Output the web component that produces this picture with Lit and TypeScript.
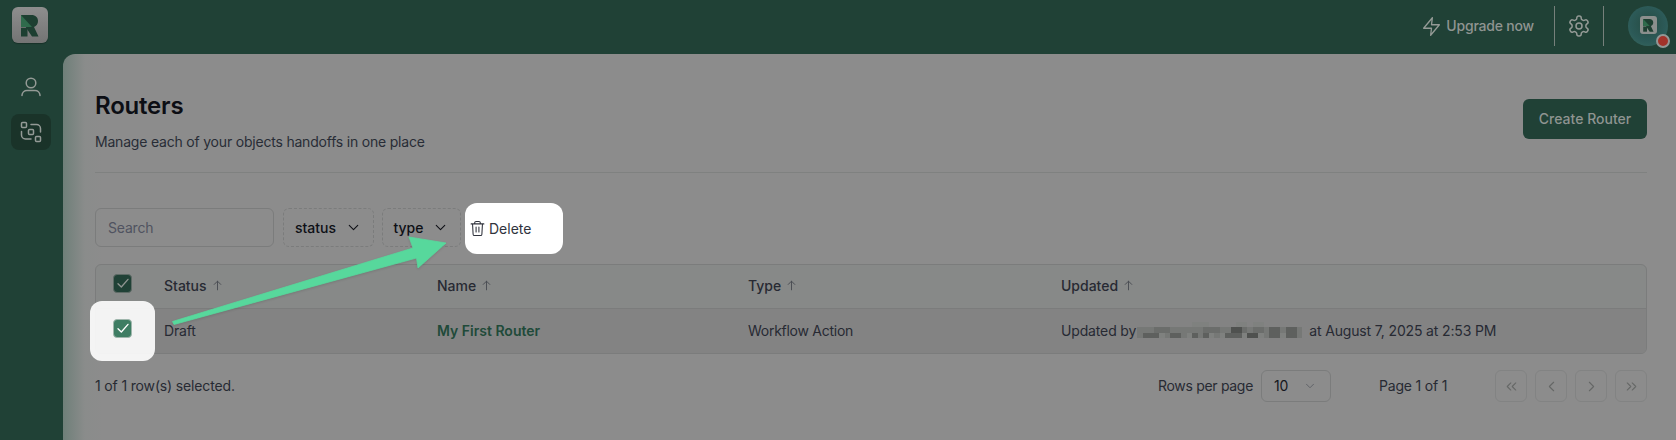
import { LitElement, html, css, svg } from "lit";
import { customElement } from "lit/decorators.js";

const chevronDown = html`<svg class="chev" viewBox="0 0 24 24"><path d="m6 9 6 6 6-6"/></svg>`;
const arrowUp = html`<svg class="sort" viewBox="0 0 24 24"><path d="M12 20V4M6 10l6-6 6 6"/></svg>`;
const check = html`<svg viewBox="0 0 24 24"><path d="M4.5 13l5 5L19.5 6.5"/></svg>`;

const shades = ["transparent", "#7f817f", "#767876", "#6b6d6b", "#5e605e", "#4f514f"];
const blurRows = [
  "000000000011100000110110000000",
  "222333222222333225532332442442",
  "244412442142412144415512441442",
];

@customElement("app-root")
export class AppRoot extends LitElement {
  static styles = css`
    :host { display: block; width: 1676px; height: 440px; overflow: hidden; position: relative; background: #204136;
      font-family: Inter, "Liberation Sans", sans-serif; color: #2a2d36; font-size: 14px; letter-spacing: -.15px; }
    .top { height: 54px; display: flex; align-items: center; padding-bottom: 2px; box-sizing: border-box; }
    .logo { width: 36px; height: 36px; margin: -2px 0 0 12px; border-radius: 6px; background: linear-gradient(#8e8e8e, #747474); display: flex; align-items: center; justify-content: center; box-shadow: 0 1px 1px rgba(0,0,0,.25); }
    .logo svg { width: 18px; height: 22px; margin-top: 1px; }
    .spacer { flex: 1; }
    .upgrade { display: flex; align-items: center; gap: 4px; color: #8f9491; font-weight: 500; font-size: 14px; margin-right: 20px; letter-spacing: -.2px; line-height: 17px; }
    .upgrade span { padding-bottom: 2px; }
    .upgrade svg { width: 21px; height: 21px; }
    .sep { width: 1px; height: 40px; background: #76807b; }
    .gear { width: 48px; display: flex; justify-content: center; }
    .gear svg { width: 24px; height: 24px; }
    .avatar { width: 40px; height: 40px; margin: 0 8px 0 24px; border-radius: 50%; position: relative; display: flex; align-items: center; justify-content: center;
      background: radial-gradient(circle at 50% 45%, #264b42 0, #2c5a58 60%, #3a6b60 100%); }
    .avatar .inner { width: 17px; height: 18px; border-radius: 3px; background: #8b8f8d; display: flex; align-items: center; justify-content: center; margin-bottom: 2px; }
    .avatar .inner svg { width: 11px; height: 13px; }
    .dot { position: absolute; right: -2px; bottom: -2px; width: 14px; height: 14px; box-sizing: border-box; border-radius: 50%; background: #a2332a; border: 2px solid #939795; }
    .body { display: flex; height: 386px; }
    .side { width: 63px; display: flex; flex-direction: column; align-items: center; padding: 14px 1px 0 0; box-sizing: border-box; gap: 10px; }
    .side .item { width: 40px; height: 36px; display: flex; align-items: center; justify-content: center; border-radius: 8px; }
    .side .item.active { background: #1a3329; }
    .side svg { width: 24px; height: 24px; }
    .ic { fill: none; stroke: #949a96; stroke-width: 1.5; stroke-linecap: round; stroke-linejoin: round; }
    .main { flex: 1; background: linear-gradient(90deg, #6f7f79 0, #8a8c8b 22px, #8c8c8c 40px); border-top-left-radius: 12px; padding: 0 29px 0 32px; box-sizing: border-box; position: relative; }
    .head { display: flex; justify-content: space-between; align-items: flex-start; height: 119px; border-bottom: 1px solid #7f8180; box-sizing: border-box; padding-top: 36px; }
    h1 { margin: 0; font-size: 24px; line-height: 32px; font-weight: 600; color: #0c0e14; letter-spacing: -.2px; }
    .sub { margin-top: 10px; line-height: 20px; color: #282c36; font-size: 14px; letter-spacing: -.2px; }
    .create { width: 124px; height: 40px; padding-bottom: 2px; box-sizing: border-box; margin-top: 9px; border: 0; border-radius: 6px; background: #204136; color: #8f9491; font: 500 14px Inter, sans-serif; letter-spacing: 0; display: flex; align-items: center; justify-content: center; }
    .toolbar { display: flex; align-items: center; height: 39px; margin-top: 35px; position: relative; }
    .search { width: 179px; height: 39px; box-sizing: border-box; border: 1px solid #7b7c7c; border-radius: 6px; padding-left: 12px; display: flex; align-items: center; color: #505360; font-size: 14px; letter-spacing: -.2px; }
    .filter { height: 39px; box-sizing: border-box; border: 1px dashed #7b7c7c; border-radius: 6px; display: flex; align-items: center; justify-content: center; gap: 9px; font-weight: 500; color: #0e1016; font-size: 14px; letter-spacing: 0; }
    .filter.s { width: 91px; margin-left: 9px; }
    .filter.t { width: 79px; margin-left: 8px; }
    .chev { width: 17px; height: 17px; fill: none; stroke: #0e1016; stroke-width: 1.5; stroke-linecap: round; stroke-linejoin: round; }
    .delete { width: 98px; height: 51px; margin: 2px 0 0 4px; background: #fff; border-radius: 12px; display: flex; align-items: center; gap: 3px; padding-left: 4px; box-sizing: border-box; color: #30333d; font-size: 14px; letter-spacing: 0; position: relative; z-index: 2; }
    .delete svg { width: 17px; height: 17px; fill: none; stroke: #30333d; stroke-width: 1.5; stroke-linecap: round; stroke-linejoin: round; margin-top: -1px; }
    .table { margin-top: 17px; height: 90px; border: 1px solid #7b7c7c; border-radius: 6px; box-sizing: border-box; overflow: hidden; background: #878988; }
    .row { display: grid; grid-template-columns: 68px 273px 311px 313px 1fr; align-items: center; height: 44px; box-sizing: border-box; }
    .row.hdr { border-bottom: 1px solid #7b7c7c; }
    .row.sel { background: #838383; }
    .cell { display: flex; align-items: center; white-space: nowrap; color: #272a33; font-size: 14px; padding-bottom: 2px; }
    .hdr .cell { font-weight: 500; gap: 4px; letter-spacing: 0; }
    .tight { letter-spacing: -.27px; }
    .sort { width: 13px; height: 13px; fill: none; stroke: #4a4d53; stroke-width: 1.8; stroke-linecap: round; stroke-linejoin: round; }
    .cb { width: 19px; height: 19px; border-radius: 4px; margin-left: 17px; display: flex; align-items: center; justify-content: center; box-sizing: border-box; position: relative; z-index: 3; }
    .cb svg { width: 16px; height: 16px; fill: none; stroke-width: 2; stroke-linecap: round; stroke-linejoin: round; }
    .cb.dim { background: #204136; border: 1px solid #5e6b66; margin-top: -5px; }
    .cb.dim svg { stroke: #8f9491; }
    .cb.lit { background: #3e7d63; border: 1px solid #9fb6ac; margin-top: -4px; }
    .cb.lit svg { stroke: #fff; }
    .link { color: #204a39; font-weight: 600; letter-spacing: 0; }
    .blur { display: grid; grid-template-columns: repeat(30, 5.5px); grid-auto-rows: 5.5px; margin: 0 7px 0 1px; }
    .foot { display: flex; align-items: center; margin-top: 16px; height: 32px; color: #272a33; font-size: 14px; }
    .foot .count { flex: 1; padding-bottom: 2px; }
    .rows { letter-spacing: -.3px; padding-bottom: 2px; }
    .sel-box { width: 70px; height: 32px; box-sizing: border-box; margin-left: 8px; border: 1px solid #7b7c7c; border-radius: 6px; display: flex; align-items: center; justify-content: space-between; padding: 0 13px 2px 12px; color: #15171d; }
    .sel-box .chev { stroke: #5a5d63; width: 14px; height: 14px; margin-top: 2px; }
    .page { margin-left: 48px; width: 116px; letter-spacing: -.2px; padding-bottom: 2px; }
    .pager { display: flex; gap: 8px; }
    .pager span { width: 32px; height: 32px; box-sizing: border-box; border: 1px solid #828383; border-radius: 6px; display: flex; align-items: center; justify-content: center; }
    .pager svg { width: 17px; height: 17px; fill: none; stroke: #656766; stroke-width: 1.5; stroke-linecap: round; stroke-linejoin: round; }
    .hl { position: absolute; left: 90px; top: 301px; width: 65px; height: 60px; border-radius: 12px; background: rgba(255,255,255,.9); z-index: 2; }
    .arrow { position: absolute; left: 0; top: 0; width: 1676px; height: 440px; z-index: 4; pointer-events: none; overflow: visible; filter: drop-shadow(0 1px 1px rgba(0,0,0,.12)); }
  `;

  private rMark() {
    return svg`<path d="M0 0H10.5C14.5 0 17 2.5 17 6C17 9 15.5 11 13 12L17.5 21.5H11L4.8 12.3H0Z" fill="#1d3f31"/>
      <path d="M0 0L11 12H0Z" fill="#2f6b4c"/>
      <path d="M0 13H6.5V21.5H0Z" fill="#1d3f31"/>`;
  }

  render() {
    return html`
      <div class="top">
        <div class="logo"><svg viewBox="0 0 18 22">${this.rMark()}</svg></div>
        <div class="spacer"></div>
        <div class="upgrade"><svg class="ic" viewBox="0 0 24 24"><path d="M13 2 3 14h9l-1 8 10-12h-9l1-8z"/></svg><span>Upgrade now</span></div>
        <div class="sep"></div>
        <div class="gear"><svg class="ic" viewBox="0 0 24 24"><path d="M12.22 2h-.44a2 2 0 0 0-2 2v.18a2 2 0 0 1-1 1.73l-.43.25a2 2 0 0 1-2 0l-.15-.08a2 2 0 0 0-2.73.73l-.22.38a2 2 0 0 0 .73 2.73l.15.1a2 2 0 0 1 1 1.72v.51a2 2 0 0 1-1 1.74l-.15.09a2 2 0 0 0-.73 2.73l.22.38a2 2 0 0 0 2.73.73l.15-.08a2 2 0 0 1 2 0l.43.25a2 2 0 0 1 1 1.73V20a2 2 0 0 0 2 2h.44a2 2 0 0 0 2-2v-.18a2 2 0 0 1 1-1.73l.43-.25a2 2 0 0 1 2 0l.15.08a2 2 0 0 0 2.73-.73l.22-.39a2 2 0 0 0-.73-2.73l-.15-.08a2 2 0 0 1-1-1.74v-.5a2 2 0 0 1 1-1.74l.15-.09a2 2 0 0 0 .73-2.73l-.22-.38a2 2 0 0 0-2.73-.73l-.15.08a2 2 0 0 1-2 0l-.43-.25a2 2 0 0 1-1-1.73V4a2 2 0 0 0-2-2z"/><circle cx="12" cy="12" r="3"/></svg></div>
        <div class="sep"></div>
        <div class="avatar">
          <div class="inner"><svg viewBox="0 0 18 22">${this.rMark()}</svg></div>
          <div class="dot"></div>
        </div>
      </div>
      <div class="body">
        <div class="side">
          <div class="item"><svg class="ic" viewBox="0 -2 24 24"><circle cx="12" cy="7" r="4.8"/><path d="M3 19.500v-.5a5 5 0 0 1 5-4.500h8a5 5 0 0 1 5 4.500v.5"/></svg></div>
          <div class="item active"><svg class="ic" viewBox="0 0 24 24"><rect x="2.500" y="2.500" width="5" height="5" rx="1"/><rect x="9.500" y="9.500" width="5" height="5" rx="1"/><rect x="16.500" y="16.500" width="5" height="5" rx="1"/><path d="M12 4.500h5.500a4 4 0 0 1 4 4v3.500M2.500 11.500v3.500a4 4 0 0 0 4 4h5.500"/></svg></div>
        </div>
        <div class="main">
          <div class="head">
            <div>
              <h1>Routers</h1>
              <div class="sub">Manage each of your objects handoffs in one place</div>
            </div>
            <div class="create">Create Router</div>
          </div>
          <div class="toolbar">
            <div class="search">Search</div>
            <div class="filter s">status ${chevronDown}</div>
            <div class="filter t">type ${chevronDown}</div>
            <div class="delete">
              <svg viewBox="0 0 24 24"><path d="M3 5.500h18M8 5.500V4a2 2 0 0 1 2-2h4a2 2 0 0 1 2 2v1.500M19 5.500 18.200 20a2 2 0 0 1-2 2H7.800a2 2 0 0 1-2-2L5 5.500M10 10v7M14 10v7"/></svg>
              Delete
            </div>
          </div>
          <div class="table">
            <div class="row hdr">
              <div class="cell"><div class="cb dim">${check}</div></div>
              <div class="cell">Status ${arrowUp}</div>
              <div class="cell">Name ${arrowUp}</div>
              <div class="cell">Type ${arrowUp}</div>
              <div class="cell">Updated ${arrowUp}</div>
            </div>
            <div class="row sel">
              <div class="cell"><div class="cb lit">${check}</div></div>
              <div class="cell">Draft</div>
              <div class="cell link">My First Router</div>
              <div class="cell tight">Workflow Action</div>
              <div class="cell">Updated by
                <span class="blur">${blurRows.map((r) =>
                  [...r].map((d) => html`<i style="background:${shades[+d]}"></i>`)
                )}</span>
                at August 7, 2025 at 2:53 PM</div>
            </div>
          </div>
          <div class="foot">
            <div class="count">1 of 1 row(s) selected.</div>
            <div class="rows">Rows per page</div>
            <div class="sel-box">10 ${chevronDown}</div>
            <div class="page">Page 1 of 1</div>
            <div class="pager">
              <span><svg viewBox="0 0 24 24"><path d="m11 17-5-5 5-5M18 17l-5-5 5-5"/></svg></span>
              <span><svg viewBox="0 0 24 24"><path d="m15 18-6-6 6-6"/></svg></span>
              <span><svg viewBox="0 0 24 24"><path d="m9 18 6-6-6-6"/></svg></span>
              <span><svg viewBox="0 0 24 24"><path d="m6 17 5-5-5-5M13 17l5-5-5-5"/></svg></span>
            </div>
          </div>
        </div>
      </div>
      <div class="hl"></div>
      <svg class="arrow" viewBox="0 0 1676 440">
        <path d="M172.500 321.500L413 248L409 237L446 243L418 268L416.500 258L174 324.500Z" fill="#57d89c" stroke="#57d89c" stroke-width=".8" stroke-linejoin="round"/>
      </svg>
    `;
  }
}
